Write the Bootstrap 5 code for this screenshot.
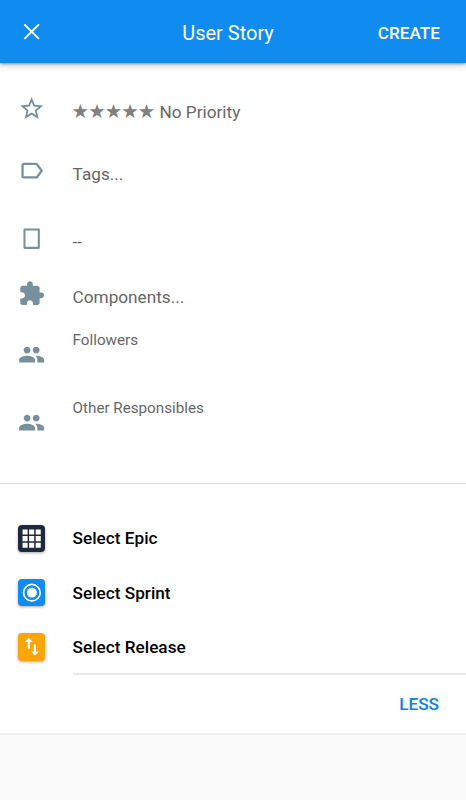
<!DOCTYPE html>
<html lang="en">
<head>
<meta charset="utf-8">
<meta name="viewport" content="width=device-width, initial-scale=1">
<title>User Story</title>
<link href="https://cdn.jsdelivr.net/npm/bootstrap@5.3.0/dist/css/bootstrap.min.css" rel="stylesheet">
<style>
body{font-family:Roboto,sans-serif;background:#fafafa;color:#000;font-size:17.2px;line-height:22px;min-height:800px;overflow:hidden}
.app-bar{height:63px;background:#108bef;color:#fff;box-shadow:0 1px 3px rgba(0,0,0,.4),0 3px 8px rgba(0,0,0,.12);display:grid;grid-template-columns:1fr auto 1fr;padding:2px 26px 0 18px;z-index:1}
.app-bar h1{font-size:20px;font-weight:400;line-height:24px;margin:0 1px 0 -1px}
.app-bar .btn,.less{font-size:17.2px;font-weight:500;line-height:22px}
.icon{width:27.3px;height:27.3px;fill:#78909c;flex:none}
.app-bar .icon{fill:#fff;margin-top:-1px}
.fields{height:420px;padding:32px 0 0 18px;color:#666}
.field{gap:27.3px}
.h-star{height:62px}.h-tag{height:68px}.h-card{height:55px}.h-comp{height:50px}.h-people{height:68px}
.field .txt{padding-top:5.5px}
.h-card .txt{padding-top:6px}
.h-people .txt{font-size:15.2px;line-height:20px;padding:0}
.h-people .icon{margin-top:10.6px}
.stars{font-family:"DejaVu Sans",sans-serif;font-size:19.5px;letter-spacing:-.95px;margin-left:-1px;margin-right:1px;line-height:20px;color:#808080}
.links{border-top:1px solid #d9d9d9;padding:27px 0 0 18px}
.link-row{height:54.4px;gap:27.3px;font-weight:500}
.tile{width:27.3px;height:27.3px;border-radius:4px;box-shadow:0 1px 3px rgba(0,0,0,.35);flex:none}
.tile svg{display:block;width:100%;height:100%}
.t-epic{background:#1e293b}.t-sprint{background:#108bef}.t-release{background:#f8a60a}
.foot{margin:-1px 0 0 54.5px;border-top:2px solid #e8e8e8;height:60px;padding:0 27px 1px 0}
.less{color:#0b82ee}
.sheet{border-bottom:2px solid #eee}
</style>
</head>
<body>
<header class="app-bar align-items-center position-relative">
  <button class="btn p-0 border-0 text-start d-flex" aria-label="Close"><svg class="icon" viewBox="0 0 24 24"><path d="M19 6.2 17.8 5 12 10.8 6.2 5 5 6.2 10.8 12 5 17.8 6.2 19 12 13.2 17.8 19 19 17.8 13.2 12z"/></svg></button>
  <h1>User Story</h1>
  <button class="btn p-0 border-0 text-white text-end">CREATE</button>
</header>
<main class="sheet bg-white">
  <section class="fields">
    <div class="field d-flex align-items-start h-star">
      <svg class="icon" viewBox="0 0 24 24"><path d="M22 9.24l-7.19-.62L12 2 9.19 8.63 2 9.24l5.46 4.73L5.82 21 12 17.27 18.18 21l-1.63-7.03L22 9.24zM12 15.4l-3.76 2.27 1-4.28-3.32-2.88 4.38-.38L12 6.1l1.71 4.04 4.38.38-3.32 2.88 1 4.28L12 15.4z"/></svg>
      <div class="txt"><span class="stars">★★★★★</span> No Priority</div>
    </div>
    <div class="field d-flex align-items-start h-tag">
      <svg class="icon" viewBox="0 0 24 24"><path d="M17.63 5.84C17.27 5.33 16.67 5 16 5L5 5.01C3.9 5.01 3 5.9 3 7v10c0 1.1.9 1.99 2 1.99L16 19c.67 0 1.27-.33 1.63-.84L22 12l-4.37-6.16zM16 17H5V7h11l3.55 5L16 17z"/></svg>
      <div class="txt">Tags...</div>
    </div>
    <div class="field d-flex align-items-start h-card">
      <svg class="icon" viewBox="0 0 24 24"><path d="M18 3H6c-.7 0-1.200.500-1.200 1.200v15.600c0 .7.500 1.200 1.200 1.200h12c.7 0 1.200-.5 1.200-1.200V4.200C19.200 3.500 18.700 3 18 3zm-.6 16.200H6.600V4.800h10.800v14.400z"/></svg>
      <div class="txt">--</div>
    </div>
    <div class="field d-flex align-items-start h-comp">
      <svg class="icon" viewBox="0 0 24 24"><path d="M20.500 11H19V7c0-1.100-.900-2-2-2h-4V3.500C13 2.120 11.880 1 10.500 1S8 2.120 8 3.500V5H4c-1.100 0-1.990.900-1.990 2v3.800H3.500c1.490 0 2.700 1.210 2.700 2.700s-1.210 2.700-2.700 2.700H2V20c0 1.100.900 2 2 2h3.800v-1.500c0-1.490 1.210-2.700 2.700-2.700 1.490 0 2.700 1.210 2.700 2.700V22H17c1.100 0 2-.900 2-2v-4h1.500c1.380 0 2.500-1.120 2.500-2.500S21.880 11 20.500 11z"/></svg>
      <div class="txt">Components...</div>
    </div>
    <div class="field d-flex align-items-start h-people">
      <svg class="icon" viewBox="0 0 24 24"><path d="M16 11c1.660 0 2.990-1.340 2.990-3S17.660 5 16 5c-1.660 0-3 1.340-3 3s1.340 3 3 3zm-8 0c1.660 0 2.990-1.340 2.990-3S9.660 5 8 5C6.340 5 5 6.340 5 8s1.340 3 3 3zm0 2c-2.330 0-7 1.170-7 3.500V19h14v-2.500c0-2.330-4.670-3.500-7-3.500zm8 0c-.290 0-.620.020-.970.050 1.160.840 1.970 1.970 1.970 3.450V19h6v-2.500c0-2.330-4.670-3.500-7-3.500z"/></svg>
      <div class="txt">Followers</div>
    </div>
    <div class="field d-flex align-items-start h-people">
      <svg class="icon" viewBox="0 0 24 24"><path d="M16 11c1.660 0 2.990-1.340 2.990-3S17.660 5 16 5c-1.660 0-3 1.340-3 3s1.340 3 3 3zm-8 0c1.660 0 2.990-1.340 2.990-3S9.660 5 8 5C6.340 5 5 6.340 5 8s1.340 3 3 3zm0 2c-2.330 0-7 1.170-7 3.500V19h14v-2.500c0-2.330-4.670-3.500-7-3.500zm8 0c-.290 0-.620.020-.970.050 1.160.840 1.970 1.970 1.970 3.450V19h6v-2.500c0-2.330-4.670-3.500-7-3.500z"/></svg>
      <div class="txt">Other Responsibles</div>
    </div>
  </section>
  <section class="links">
    <div class="link-row d-flex align-items-center">
      <div class="tile t-epic"><svg viewBox="0 0 27 27" fill="#fff"><path d="M4.500 4.500h5v5h-5zM11 4.500h5v5h-5zM17.500 4.500h5v5h-5zM4.500 11h5v5h-5zM11 11h5v5h-5zM17.500 11h5v5h-5zM4.500 17.500h5v5h-5zM11 17.500h5v5h-5zM17.500 17.500h5v5h-5z"/></svg></div>
      <div>Select Epic</div>
    </div>
    <div class="link-row d-flex align-items-center">
      <div class="tile t-sprint"><svg viewBox="0 0 27 27"><circle cx="13.700" cy="13.500" r="8.200" fill="none" stroke="#fff" stroke-width="1.700"/><circle cx="13.700" cy="13.500" r="4.900" fill="#fff"/></svg></div>
      <div>Select Sprint</div>
    </div>
    <div class="link-row d-flex align-items-center">
      <div class="tile t-release"><svg viewBox="0 0 27 27" fill="#fff"><path d="M10.700 4.800l3.900 4h-2.800v6.800H9.600V8.800H6.800zM16.700 22.300l-3.900-4h2.800v-6.900h2.200v6.900h2.800z"/></svg></div>
      <div>Select Release</div>
    </div>
    <div class="foot d-flex align-items-center justify-content-end"><button class="btn p-0 border-0 less">LESS</button></div>
  </section>
</main>
<script src="https://cdn.jsdelivr.net/npm/bootstrap@5.3.0/dist/js/bootstrap.bundle.min.js"></script>
</body>
</html>
